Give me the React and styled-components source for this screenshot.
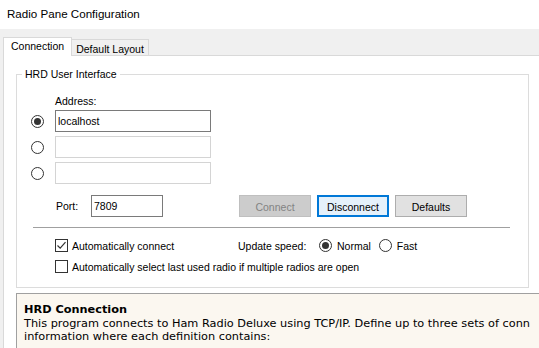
import React from "react";
import styled, { createGlobalStyle } from "styled-components";

const GlobalStyle = createGlobalStyle`
  html, body {
    margin: 0;
    padding: 0;
    overflow: hidden;
    background: #ffffff;
  }
  body {
    font-family: "Liberation Sans", Arial, sans-serif;
    font-size: 10.5px;
    color: #000000;
  }
`;

export default () => {
  return (
    <Window>
      <GlobalStyle />
      <Title>Radio Pane Configuration</Title>

      <Frame>
        <TabStrip>
          <Tab active>Connection</Tab>
          <Tab>Default Layout</Tab>
        </TabStrip>

        <Page>
          <Group>
            <Legend>HRD User Interface</Legend>
            <GroupBody>
              <AddressLabel>Address:</AddressLabel>
              <AddressList>
                <AddressRow>
                  <Radio checked />
                  <TextBox focused defaultValue="localhost" width={156} />
                </AddressRow>
                <AddressRow>
                  <Radio />
                  <TextBox width={156} />
                </AddressRow>
                <AddressRow>
                  <Radio />
                  <TextBox width={156} />
                </AddressRow>
              </AddressList>

              <PortRow>
                <PortLabel>Port:</PortLabel>
                <TextBox focused defaultValue="7809" width={72} />
                <Buttons>
                  <Button disabled>Connect</Button>
                  <Button primary>Disconnect</Button>
                  <Button>Defaults</Button>
                </Buttons>
              </PortRow>

              <Separator />

              <OptionRow>
                <CheckOption>
                  <Checkbox checked />
                  Automatically connect
                </CheckOption>
                <SpeedLabel>Update speed:</SpeedLabel>
                <RadioOption>
                  <Radio checked />
                  Normal
                </RadioOption>
                <RadioOption>
                  <Radio />
                  Fast
                </RadioOption>
              </OptionRow>

              <OptionRow second>
                <CheckOption>
                  <Checkbox />
                  Automatically select last used radio if multiple radios are open
                </CheckOption>
              </OptionRow>
            </GroupBody>
          </Group>

          <Info>
            <InfoTitle>HRD Connection</InfoTitle>
            <InfoLine>
              This program connects to Ham Radio Deluxe using TCP/IP. Define up to three sets of conn
            </InfoLine>
            <InfoLine>information where each definition contains:</InfoLine>
          </Info>
        </Page>
      </Frame>
    </Window>
  );
};

const Radio = ({ checked }) => (
  <RadioCircle>{checked && <RadioDot />}</RadioCircle>
);

const Checkbox = ({ checked }) => (
  <CheckBoxBox>
    {checked && (
      <svg width="11" height="11" viewBox="0 0 11 11">
        <polyline
          points="1.5,5.5 4.2,8.2 9.5,2.2"
          fill="none"
          stroke="#333333"
          strokeWidth="1.2"
        />
      </svg>
    )}
  </CheckBoxBox>
);

const Window = styled.div`
  width: 539px;
  height: 348px;
  display: flex;
  flex-direction: column;
  background: #ffffff;
`;

const Title = styled.div`
  height: 29px;
  padding-left: 7px;
  font-size: 11.6px;
  line-height: 28px;
`;

const Frame = styled.div`
  flex: 1;
  display: flex;
  flex-direction: column;
  background: #f0f0f0;
  padding-left: 3px;
`;

const TabStrip = styled.div`
  height: 26px;
  display: flex;
  align-items: flex-end;
`;

const Tab = styled.div`
  position: relative;
  box-sizing: border-box;
  height: ${(p) => (p.active ? "19px" : "16px")};
  margin-bottom: ${(p) => (p.active ? "-1px" : "0")};
  padding: ${(p) => (p.active ? "1px 7px 0 7px" : "2px 4px 0 4px")};
  background: ${(p) => (p.active ? "#ffffff" : "#f0f0f0")};
  border: 1px solid #d9d9d9;
  border-bottom: none;
  border-left: ${(p) => (p.active ? "1px solid #d9d9d9" : "none")};
  z-index: ${(p) => (p.active ? 2 : 1)};
  line-height: 14px;
  white-space: nowrap;
`;

const Page = styled.div`
  flex: 1;
  background: #ffffff;
  border-top: 1px solid #d9d9d9;
  border-left: 1px solid #d9d9d9;
  padding: 11px 10px 0 12px;
  display: flex;
  flex-direction: column;
`;

const Group = styled.fieldset`
  margin: 0;
  padding: 0;
  border: 1px solid #dcdcdc;
  min-width: 0;
`;

const Legend = styled.legend`
  margin-left: 5px;
  padding: 0 3px;
  line-height: 14px;
  font-size: 10.5px;
`;

const GroupBody = styled.div`
  display: flex;
  flex-direction: column;
  padding: 13px 0 14px 14px;
`;

const AddressLabel = styled.div`
  margin-left: 24px;
  line-height: 14px;
  margin-bottom: 2px;
`;

const AddressList = styled.div`
  display: flex;
  flex-direction: column;
  gap: 4px;
`;

const AddressRow = styled.div`
  display: flex;
  align-items: center;
  gap: 11px;
`;

const RadioCircle = styled.span`
  box-sizing: border-box;
  width: 13px;
  height: 13px;
  flex: none;
  border: 1px solid #333333;
  border-radius: 50%;
  background: #ffffff;
  display: inline-flex;
  align-items: center;
  justify-content: center;
`;

const RadioDot = styled.span`
  width: 7px;
  height: 7px;
  border-radius: 50%;
  background: #333333;
`;

const CheckBoxBox = styled.span`
  box-sizing: border-box;
  width: 13px;
  height: 13px;
  flex: none;
  border: 1px solid #333333;
  background: #ffffff;
  display: inline-flex;
  align-items: center;
  justify-content: center;
`;

const TextBox = styled.input`
  box-sizing: border-box;
  width: ${(p) => p.width}px;
  height: 22px;
  margin: 0;
  padding: 0 2px;
  border: 1px solid ${(p) => (p.focused ? "#7a7a7a" : "#d4d4d4")};
  background: #ffffff;
  font-family: "Liberation Sans", Arial, sans-serif;
  font-size: 10.5px;
  color: #000000;
  outline: none;
`;

const PortRow = styled.div`
  display: flex;
  align-items: center;
  margin-top: 10px;
`;

const PortLabel = styled.span`
  margin-left: 25px;
  width: 35px;
  padding-top: 1px;
`;

const Buttons = styled.div`
  display: flex;
  gap: 6px;
  margin-left: 76px;
  padding-top: 1px;
`;

const Button = styled.button`
  box-sizing: border-box;
  width: 72px;
  height: 22px;
  margin: 0;
  padding: 2px 0 0 0;
  font-family: "Liberation Sans", Arial, sans-serif;
  font-size: 10.5px;
  color: ${(p) => (p.disabled ? "#838383" : "#000000")};
  background: ${(p) =>
    p.disabled ? "#cccccc" : p.primary ? "#e5f1fb" : "#e1e1e1"};
  border: 1px solid
    ${(p) => (p.disabled ? "#bfbfbf" : p.primary ? "#0078d7" : "#adadad")};
  box-shadow: ${(p) => (p.primary ? "inset 0 0 0 1px #0078d7" : "none")};
`;

const Separator = styled.div`
  margin: 10px 0 0 2px;
  width: 477px;
  border-top: 1px solid #a0a0a0;
`;

const OptionRow = styled.div`
  display: flex;
  align-items: center;
  height: 13px;
  margin-top: ${(p) => (p.second ? "8px" : "11px")};
  white-space: nowrap;
`;

const CheckOption = styled.label`
  display: flex;
  align-items: center;
  gap: 4px;
  margin-left: 24px;
  width: 183px;
`;

const SpeedLabel = styled.span`
  width: 81px;
`;

const RadioOption = styled.label`
  display: flex;
  align-items: center;
  gap: 5px;
  margin-right: 8px;
`;

const Info = styled.div`
  margin: 5px -10px 0 0;
  flex: 1;
  background: #fbf7f0;
  border-top: 1px solid #a0a0a0;
  border-left: 1px solid #a0a0a0;
  padding: 9px 0 0 7px;
  font-family: "DejaVu Sans", Verdana, sans-serif;
  font-size: 11.3px;
  line-height: 13.5px;
  white-space: nowrap;
  overflow: hidden;
`;

const InfoTitle = styled.div`
  font-weight: bold;
`;

const InfoLine = styled.div``;
